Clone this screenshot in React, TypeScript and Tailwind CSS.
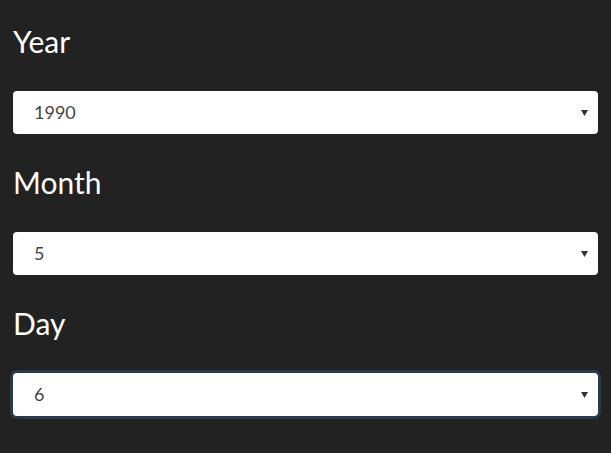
import React, { useState } from 'react';

const years = Array.from({ length: 60 }, (_, i) => String(1960 + i));
const months = Array.from({ length: 12 }, (_, i) => String(i + 1));
const days = Array.from({ length: 31 }, (_, i) => String(i + 1));

type FieldProps = {
    label: string;
    value: string;
    options: string[];
    onChange: (v: string) => void;
    focused?: boolean;
};

const Field = ({ label, value, options, onChange, focused }: FieldProps) => {
    return (
        <div className="mb-[29px]">
            <label className="block text-[30px] leading-[38px] text-white">{label}</label>
            <div className="relative mt-[31px]">
                <select
                    value={value}
                    onChange={(e) => onChange(e.target.value)}
                    className={`block h-[43px] w-full appearance-none rounded-[4px] bg-white pl-[21px] pr-8 text-[18px] text-[#444] outline-none ${
                        focused ? 'ring-[3px] ring-[#2a394c]' : ''
                    }`}
                >
                    {options.map((o) => (
                        <option key={o} value={o}>
                            {o}
                        </option>
                    ))}
                </select>
                <svg
                    className="pointer-events-none absolute right-[10px] top-1/2 -translate-y-1/2"
                    width="7"
                    height="6"
                    viewBox="0 0 7 6"
                >
                    <path d="M0 0h7L3.5 6z" fill="#333" />
                </svg>
            </div>
        </div>
    );
};

const App = () => {
    const [year, setYear] = useState('1990');
    const [month, setMonth] = useState('5');
    const [day, setDay] = useState('6');

    return (
        <div className="min-h-[453px] bg-[#222] px-[13px] pt-[22px]" style={{ fontFamily: 'Lato, "Open Sans", sans-serif' }}>
            <Field label="Year" value={year} options={years} onChange={setYear} />
            <Field label="Month" value={month} options={months} onChange={setMonth} />
            <Field label="Day" value={day} options={days} onChange={setDay} focused />
        </div>
    );
};

export default App;
